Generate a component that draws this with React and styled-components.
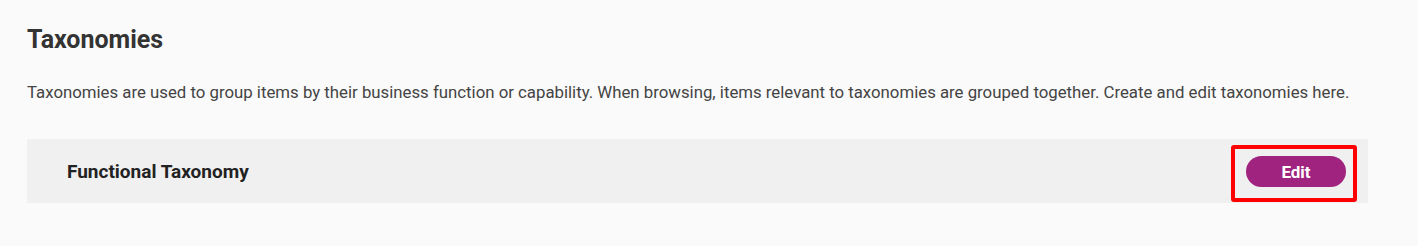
import styled, { createGlobalStyle } from 'styled-components';

const GlobalStyle = createGlobalStyle`
  html, body {
    margin: 0;
    padding: 0;
    background: #fafafa;
  }
  body {
    font-family: Roboto, "Liberation Sans", Arial, sans-serif;
  }
`;

const Page = styled.main`
  height: 246px;
  padding: 25px 50px 0 27px;
  box-sizing: border-box;
  background: #fafafa;
`;

const Title = styled.h1`
  margin: 0;
  font-size: 25px;
  line-height: 30px;
  font-weight: 700;
  color: #333333;
`;

const Description = styled.p`
  margin: 26px 0 0;
  font-size: 16.8px;
  line-height: 22px;
  color: #444444;
`;

const TaxonomyRow = styled.div`
  margin-top: 36px;
  width: 1341px;
  height: 64px;
  background: #f0f0f0;
  display: flex;
  align-items: center;
  justify-content: space-between;
  padding: 0 11px 0 40px;
  box-sizing: border-box;
`;

const RowName = styled.span`
  font-size: 19px;
  font-weight: 700;
  color: #222222;
`;

const Highlight = styled.div`
  margin-top: 5px;
  border: 4px solid #ff0000;
  border-radius: 3px;
  padding: 7px 7px 11px 11px;
  display: flex;
`;

const EditButton = styled.button`
  width: 100px;
  height: 31px;
  border: 0;
  border-radius: 16px;
  background: #a0237f;
  color: #ffffff;
  font-family: inherit;
  font-size: 17px;
  font-weight: 700;
  cursor: pointer;
`;

export default function App() {
  return (
    <>
      <GlobalStyle />
      <Page>
        <Title>Taxonomies</Title>
        <Description>
          Taxonomies are used to group items by their business function or capability. When browsing, items relevant to taxonomies are grouped together. Create and edit taxonomies here.
        </Description>
        <TaxonomyRow>
          <RowName>Functional Taxonomy</RowName>
          <Highlight>
            <EditButton type="button">Edit</EditButton>
          </Highlight>
        </TaxonomyRow>
      </Page>
    </>
  );
}
